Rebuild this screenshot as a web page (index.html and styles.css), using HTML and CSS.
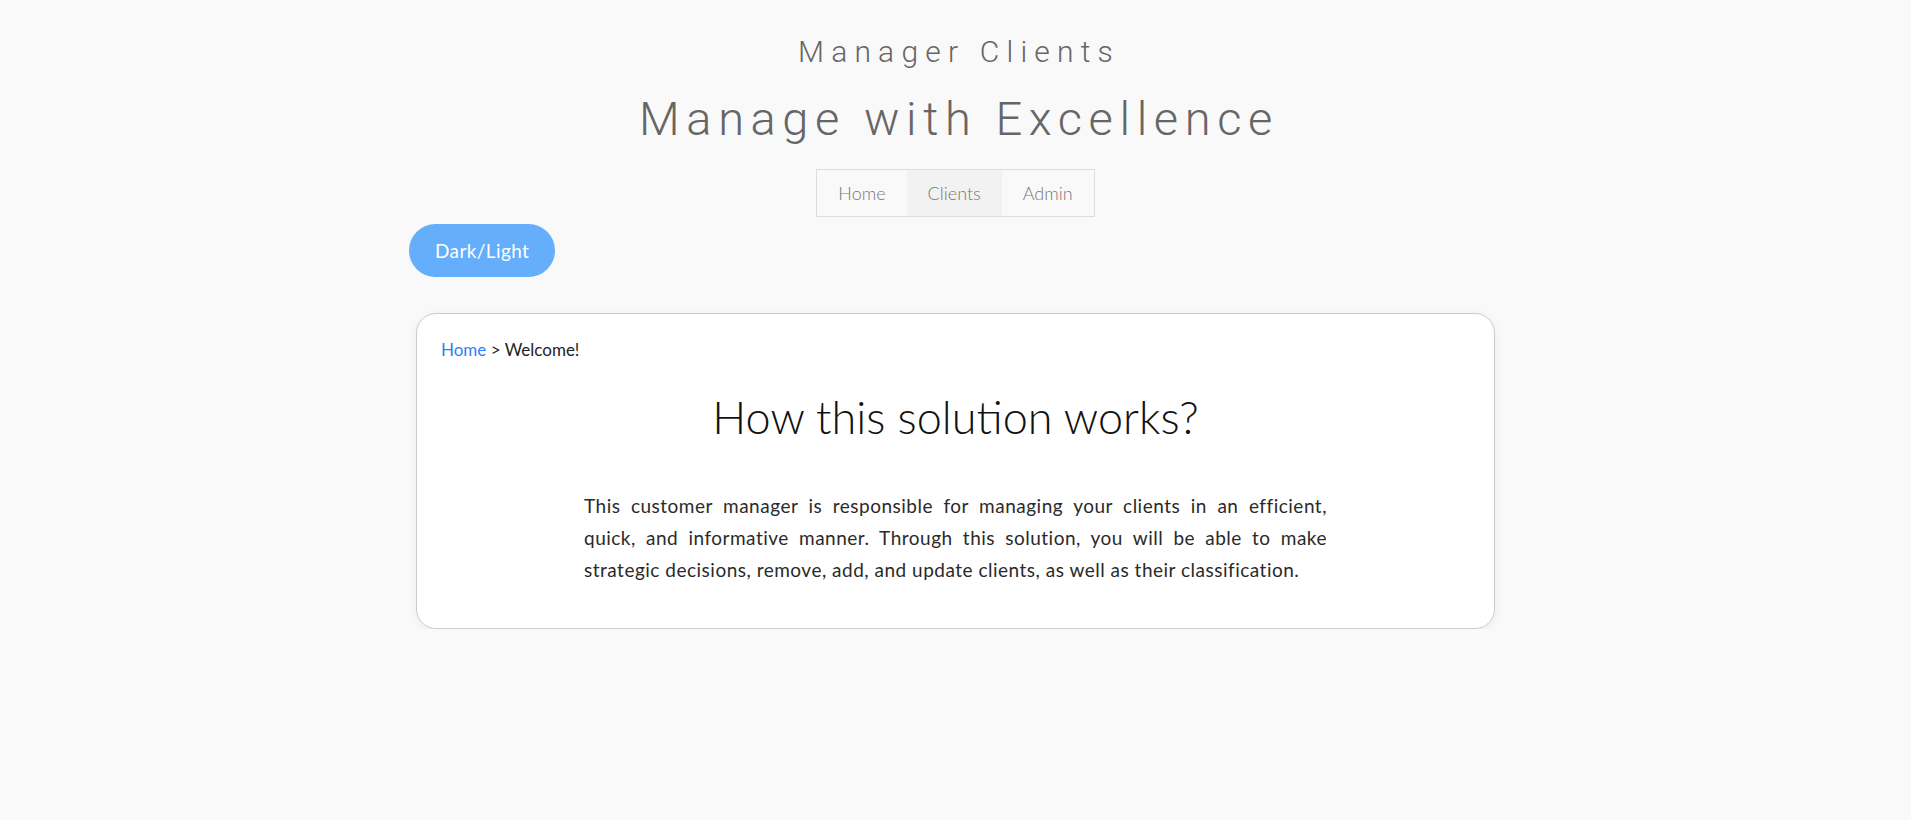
FILE: index.html
```html
<!DOCTYPE html>
<html lang="en">
<head>
<meta charset="utf-8">
<title>Manager Clients</title>
<link rel="stylesheet" href="styles.css">
</head>
<body>
<header class="site-header">
  <h2 class="brand">Manager Clients</h2>
  <h1 class="tagline">Manage with Excellence</h1>
  <nav class="nav">
    <a class="nav-item" href="#">Home</a>
    <a class="nav-item nav-item-active" href="#">Clients</a>
    <a class="nav-item" href="#">Admin</a>
  </nav>
</header>
<main class="container">
  <div class="toolbar">
    <button class="toggle">Dark/Light</button>
  </div>
  <section class="card">
    <div class="breadcrumb"><a href="#" class="crumb-link">Home</a> &gt; Welcome!</div>
    <h3 class="card-title">How this solution works?</h3>
    <p class="card-text">This customer manager is responsible for managing your clients in an efficient, quick, and informative manner. Through this solution, you will be able to make strategic decisions, remove, add, and update clients, as well as their classification.</p>
  </section>
</main>
</body>
</html>
```
FILE: styles.css
```css
* { box-sizing: border-box; }
html, body { margin: 0; padding: 0; }
body {
  background: #f9f9f9;
  font-family: Lato, "Open Sans", sans-serif;
  color: #222;
}
.site-header {
  display: flex;
  flex-direction: column;
  align-items: center;
  padding-top: 33px;
}
.brand {
  margin: 0;
  font-family: Roboto, sans-serif;
  font-weight: 300;
  font-size: 30px;
  line-height: 38px;
  letter-spacing: 7.2px;
  margin-right: -7px;
  color: #666;
}
.tagline {
  margin: 20px -7px 0 0;
  font-family: Roboto, sans-serif;
  font-weight: 300;
  font-size: 47px;
  line-height: 56px;
  letter-spacing: 6.6px;
  color: #666;
}
.nav {
  display: flex;
  margin-top: 22px;
  border: 1px solid #ddd;
}
.nav-item {
  display: block;
  padding: 0 21px;
  height: 46px;
  line-height: 46px;
  font-size: 18px;
  font-weight: 300;
  color: #777;
  text-decoration: none;
}
.nav-item-active { background: #f2f2f2; }
.container {
  width: 1093px;
  margin: 0 auto;
}
.toolbar {
  display: flex;
  margin-top: 7px;
}
.toggle {
  height: 53px;
  padding: 0 26px;
  border: none;
  border-radius: 27px;
  background: #64aefc;
  color: #fff;
  font-family: Lato, sans-serif;
  font-size: 19px;
  letter-spacing: 0.4px;
  cursor: pointer;
}
.card {
  margin: 36px 7px 0;
  background: #fff;
  border: 1px solid #ccc;
  border-radius: 20px;
  box-shadow: 0 2px 10px rgba(0,0,0,0.06);
  padding: 24px 24px 42px;
  display: flex;
  flex-direction: column;
  align-items: center;
}
.breadcrumb {
  align-self: stretch;
  font-size: 17px;
  line-height: 24px;
  color: #222;
}
.crumb-link { color: #2d7ff9; text-decoration: none; }
.card-title {
  margin: 28px 0 0;
  font-weight: 300;
  font-size: 45px;
  line-height: 54px;
  color: #111;
}
.card-text {
  margin: 46px 0 0;
  width: 743px;
  font-size: 19px;
  line-height: 32px;
  letter-spacing: 0.5px;
  text-align: justify;
  color: #2a2a2a;
}
```
